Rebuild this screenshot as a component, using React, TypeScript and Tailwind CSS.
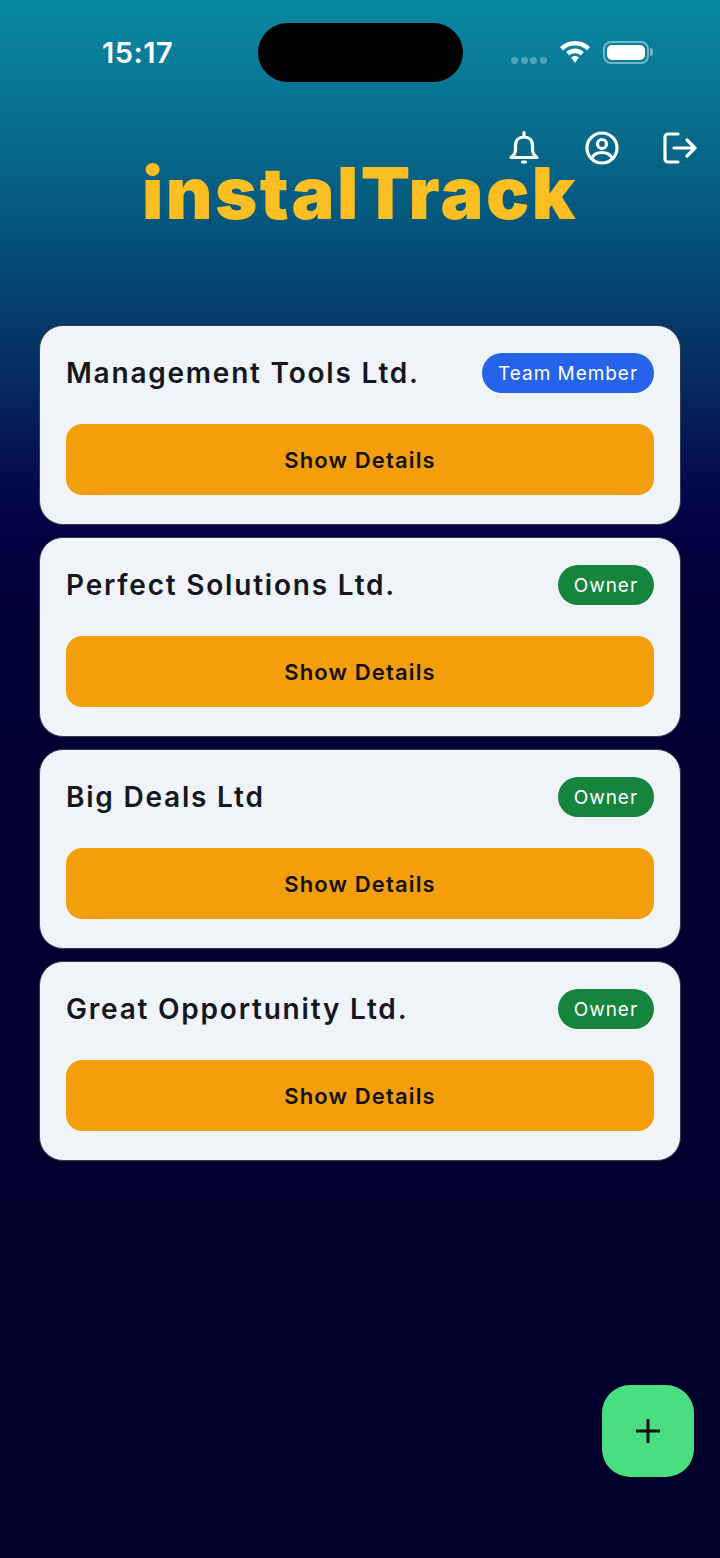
import React from "react";

const F = { fontFamily: "Inter, 'Liberation Sans', sans-serif" };

function Card({ name, role }: { name: string; role: "Owner" | "Team Member" }) {
  return (
    <div className="bg-[#f0f4f8] rounded-[24px] border border-[#343b55] px-[26px] pt-[26px] h-[200px]">
      <div className="flex items-center justify-between h-[41px]">
        <span className="text-[28px] leading-[40px] font-semibold tracking-[1.78px] text-[#14171f]">{name}</span>
        <span
          className={`h-[40px] rounded-full px-[16px] pt-[4px] flex items-center text-[19px] font-normal tracking-[0.95px] text-white ${
            role === "Owner" ? "bg-[#15843d]" : "bg-[#2563eb]"
          }`}
        >
          {role}
        </span>
      </div>
      <button className="mt-[31px] w-full h-[71px] pt-[1px] rounded-[16px] bg-[#f59e0b] flex items-center justify-center text-[22px] font-semibold tracking-[1.15px] text-[#111111]">
        Show Details
      </button>
    </div>
  );
}

export default function App() {
  return (
    <div
      style={F}
      className="relative w-[720px] h-[1558px] overflow-hidden bg-[linear-gradient(180deg,#0a89a3_0px,#055c80_200px,#04406d_300px,#06245b_400px,#040a4b_480px,#030040_540px,#010033_620px,#01002a_1558px)]"
    >
      <div className="h-[130px] pt-[23px] px-[102px] flex items-start justify-between">
        <span className="text-[29px] leading-[60px] font-semibold tracking-[0.5px] text-white">15:17</span>
        <div className="absolute left-[258px] top-[23px] w-[205px] h-[59px] rounded-full bg-black" />
        <div className="absolute left-[511px] top-[40px] flex items-center">
          <div className="flex gap-[2.5px] mt-[17px]">
            <i className="block w-[7px] h-[7px] rounded-full bg-white/30" />
            <i className="block w-[7px] h-[7px] rounded-full bg-white/30" />
            <i className="block w-[7px] h-[7px] rounded-full bg-white/30" />
            <i className="block w-[7px] h-[7px] rounded-full bg-white/30" />
          </div>
          <svg width="32" height="24" viewBox="0 0 32 24" className="ml-[12px]" fill="white">
            <path d="M16 1C10 1 5 3.3 1 7l3 3.4C7.200 7.400 11.300 5.600 16 5.600s8.800 1.800 12 4.800L31 7C27 3.300 22 1 16 1z" />
            <path d="M16 8.600c-3.400 0-6.500 1.300-8.800 3.500l3 3.400c1.500-1.400 3.500-2.300 5.800-2.300s4.300.900 5.800 2.300l3-3.400C22.500 9.900 19.400 8.600 16 8.600z" />
            <path d="M16 16c-1.500 0-2.900.600-3.900 1.500L16 23l3.900-5.500C18.900 16.600 17.500 16 16 16z" />
          </svg>
          <div className="ml-[12px] w-[46px] h-[23px] rounded-[8px] border-2 border-white/45 p-[2px]">
            <div className="w-full h-full rounded-[5px] bg-white" />
          </div>
          <div className="ml-[1px] w-[3px] h-[8px] rounded-r-full bg-white/45" />
        </div>
      </div>

      <div className="flex justify-end items-center gap-[44px] pr-[23px] h-[36px]">
        <svg width="34" height="36" viewBox="0 0 34 36" fill="none" stroke="white" strokeWidth="3.2" strokeLinejoin="round" strokeLinecap="round">
          <path d="M4 27.500c3-2 4.500-4.500 4.500-8v-4c0-5.500 3.500-8.500 8.500-8.500s8.500 3 8.500 8.500v4c0 3.500 1.500 6 4.500 8H4z" />
          <path d="M17 2.500v3M15.500 32h3" />
        </svg>
        <svg width="34" height="34" viewBox="0 0 34 34" fill="none" stroke="white" strokeWidth="3.2">
          <circle cx="17" cy="17" r="15" />
          <circle cx="17" cy="13" r="4.500" />
          <path d="M7 27c2-4 6-5.500 10-5.500s8 1.500 10 5.500" />
        </svg>
        <svg width="34" height="32" viewBox="0 0 34 32" fill="none" stroke="white" strokeWidth="3.2" strokeLinecap="round" strokeLinejoin="round">
          <path d="M15 2H5a3 3 0 0 0-3 3v22a3 3 0 0 0 3 3h10" />
          <path d="M11 16h21M24 8l8 8-8 8" />
        </svg>
      </div>

      <h1 className="text-center text-[72px] leading-[60px] font-black tracking-[2.5px] text-[#fbbf24] -mt-[3px]">
        instalTrack
      </h1>

      <div className="mt-[102px] px-[39px] flex flex-col gap-[12px]">
        <Card name="Management Tools Ltd." role="Team Member" />
        <Card name="Perfect Solutions Ltd." role="Owner" />
        <Card name="Big Deals Ltd" role="Owner" />
        <Card name="Great Opportunity Ltd." role="Owner" />
      </div>

      <button className="absolute left-[602px] top-[1385px] w-[92px] h-[92px] rounded-[28px] bg-[#4ade80] flex items-center justify-center">
        <svg width="24" height="24" viewBox="0 0 24 24" stroke="#111111" strokeWidth="3" strokeLinecap="butt">
          <path d="M12 0v24M0 12h24" />
        </svg>
      </button>
    </div>
  );
}
